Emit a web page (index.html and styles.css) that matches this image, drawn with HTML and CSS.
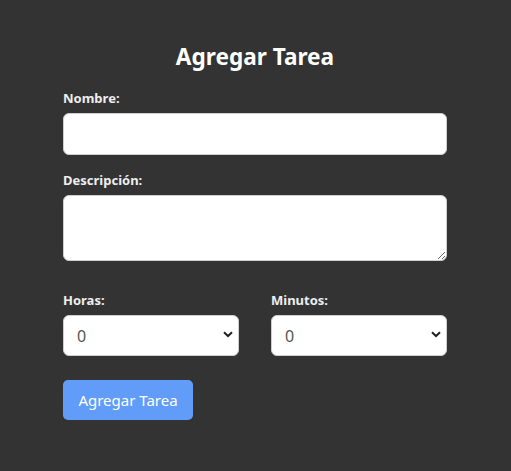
FILE: index.html
```html
<!DOCTYPE html>
<html lang="es">
<head>
<meta charset="utf-8">
<title>Agregar Tarea</title>
<link rel="stylesheet" href="styles.css">
</head>
<body>
<main class="page">
  <form class="task-form">
    <h2 class="title">Agregar Tarea</h2>
    <div class="field">
      <label class="label" for="nombre">Nombre:</label>
      <input class="input" id="nombre" type="text">
    </div>
    <div class="field">
      <label class="label" for="descripcion">Descripción:</label>
      <textarea class="input textarea" id="descripcion"></textarea>
    </div>
    <div class="row">
      <div class="field">
        <label class="label" for="horas">Horas:</label>
        <div class="select-wrap">
          <select class="input select" id="horas"><option>0</option></select>
          <svg class="chevron" width="10" height="7" viewBox="0 0 10 7"><path d="M1 1.2 L5 5 L9 1.2" fill="none" stroke="#222" stroke-width="2"/></svg>
        </div>
      </div>
      <div class="field">
        <label class="label" for="minutos">Minutos:</label>
        <div class="select-wrap">
          <select class="input select" id="minutos"><option>0</option></select>
          <svg class="chevron" width="10" height="7" viewBox="0 0 10 7"><path d="M1 1.2 L5 5 L9 1.2" fill="none" stroke="#222" stroke-width="2"/></svg>
        </div>
      </div>
    </div>
    <div class="actions">
      <button class="btn" type="button">Agregar Tarea</button>
    </div>
  </form>
</main>
</body>
</html>
```
FILE: styles.css
```css
html, body {
  margin: 0;
  padding: 0;
  background: #333333;
  height: 100%;
}
body {
  font-family: "Noto Sans", "Open Sans", sans-serif;
  color: #f2f2f2;
}
.page {
  display: flex;
  justify-content: center;
  padding-top: 41px;
  padding-right: 1px;
}
.task-form {
  width: 384px;
  display: flex;
  flex-direction: column;
}
.title {
  margin: 0 0 17px;
  text-align: center;
  font-size: 22.6px;
  font-weight: 700;
  line-height: 32px;
  color: #ffffff;
}
.field {
  display: flex;
  flex-direction: column;
  margin-bottom: 17px;
}
.label {
  font-size: 13px;
  font-weight: 700;
  line-height: 16px;
  margin-bottom: 7px;
  color: #eeeeee;
}
.input {
  box-sizing: border-box;
  width: 100%;
  height: 42px;
  border: 1px solid #cfcfcf;
  border-radius: 6px;
  background: #ffffff;
  font-family: "Noto Sans", "Open Sans", sans-serif;
  font-size: 16px;
  color: #333;
  padding: 0 13px;
  outline: none;
}
.textarea {
  height: 66px;
  display: block;
  resize: vertical;
  padding: 8px 13px;
}
.row {
  display: grid;
  grid-template-columns: 1fr 1fr;
  column-gap: 32px;
  margin-top: 14px;
}
.row .field {
  margin-bottom: 24px;
}
.select-wrap {
  position: relative;
}
.select {
  height: 41px;
  appearance: none;
  -webkit-appearance: none;
  font-weight: 400;
  color: #555555;
}
.chevron {
  position: absolute;
  right: 6px;
  top: 16px;
}
.actions {
  display: flex;
}
.btn {
  width: 130px;
  height: 40px;
  border: none;
  border-radius: 5px;
  background: #619cf8;
  color: #ffffff;
  font-family: "Noto Sans", "Open Sans", sans-serif;
  font-size: 15px;
  padding: 0;
}
```
